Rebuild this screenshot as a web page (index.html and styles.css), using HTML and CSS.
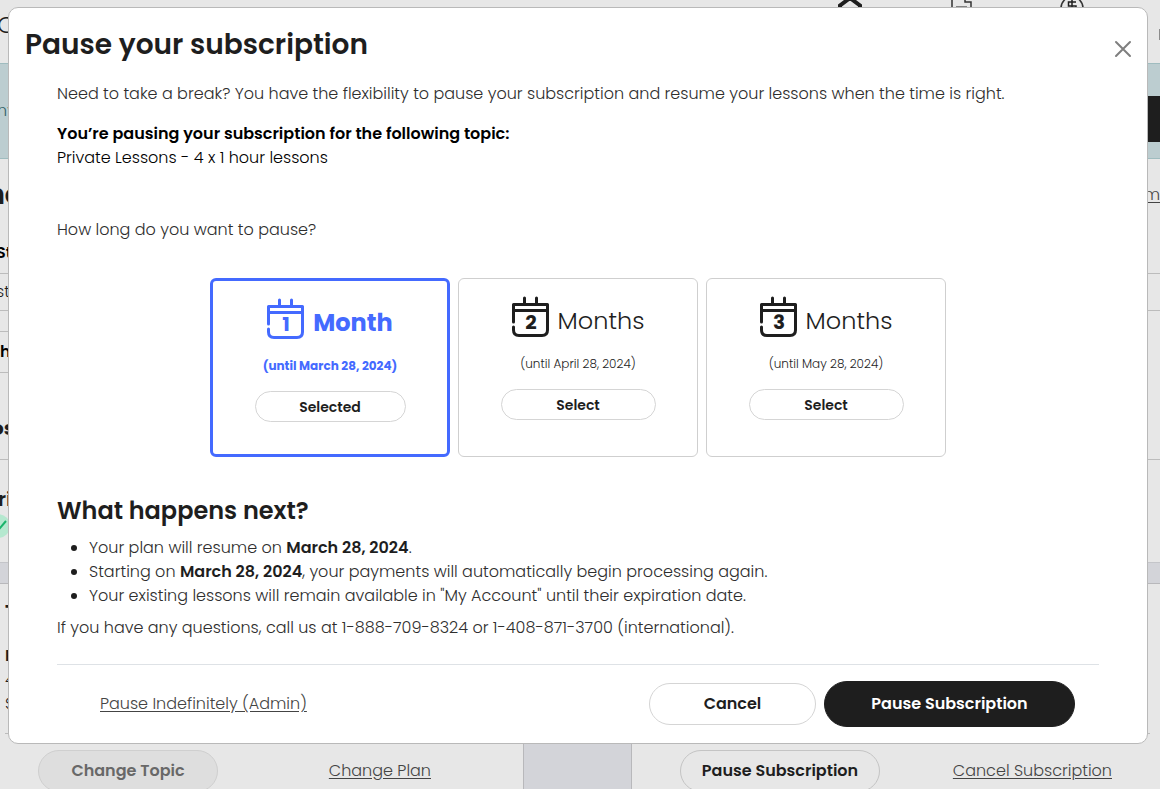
FILE: index.html
```html
<!DOCTYPE html>
<html lang="en">
<head>
    <meta charset="UTF-8">
    <meta name="viewport" content="width=device-width, initial-scale=1.0">
    <title>Pause your subscription</title>

    <link rel="stylesheet" href="styles.css">
</head>
<body>
    <div class="page">
        <header class="topBar">
            <div class="logo">C</div>
            <nav class="topNav">
                <svg width="24" height="10" viewBox="0 0 24 10"><path d="M0 7 L12 -2 L24 7" fill="none" stroke="#1e1e1e" stroke-width="4"/><path d="M3 6 V10 M21 6 V10" stroke="#1e1e1e" stroke-width="2"/></svg>
                <svg width="22" height="10" viewBox="0 0 22 10"><path d="M2 10 V-1 M15 -1 V2 H21 V10" fill="none" stroke="#333" stroke-width="1.500"/><path d="M6 7.500 H17" stroke="#1e1e1e" stroke-width="2"/></svg>
                <svg width="24" height="10" viewBox="0 0 24 10"><circle cx="12" cy="8" r="11" fill="none" stroke="#333" stroke-width="1.500"/><path d="M16 2 H8.500 V6 H16 V10 M12 -1 V10" fill="none" stroke="#1e1e1e" stroke-width="1.500"/></svg>
            </nav>
            <div class="topTail"></div>
        </header>

        <div class="banner">
            <span>nv</span>
            <button class="bannerButton" type="button" aria-label="View"></button>
        </div>

        <section class="account">
            <div class="accountTitle">
                <h1>ne</h1>
                <a href="#">m</a>
            </div>
            <div class="accountRow strong">St</div>
            <div class="accountRow">st</div>
            <div class="accountRow spacer"></div>
            <div class="accountRow strong last">h</div>
            <h3 class="accountHeading">os</h3>
            <div class="accountPlan">
                <div class="planName">ri</div>
                <svg width="24" height="24" viewBox="0 0 24 24"><circle cx="12" cy="12" r="12" fill="#b5e8cf"/><path d="M11 11 L14 14 L20 7" fill="none" stroke="#19b46b" stroke-width="2"/></svg>
            </div>
        </section>

        <section class="panels">
            <div class="panel">
                <div class="panelBody">
                    <h2>T</h2>
                    <p><b>P</b><br>4<br>S</p>
                </div>
                <div class="panelActions">
                    <button class="pill topicButton" type="button" disabled>Change Topic</button>
                    <a href="#">Change Plan</a>
                </div>
            </div>
            <div class="panel panelRight">
                <div class="panelBody"></div>
                <div class="panelActions">
                    <button class="pill pauseButton" type="button">Pause Subscription</button>
                    <a href="#">Cancel Subscription</a>
                </div>
            </div>
        </section>
    </div>

    <div class="overlay">
        <div class="modal" role="dialog" aria-labelledby="modalTitle">
            <div class="modalHeader">
                <h2 id="modalTitle">Pause your subscription</h2>
                <button class="closeButton" type="button" aria-label="Close">
                    <svg width="18" height="18" viewBox="0 0 18 18"><path d="M2 2 L16 16 M16 2 L2 16" stroke="#7f7f7f" stroke-width="2" stroke-linecap="round"/></svg>
                </button>
            </div>

            <div class="modalBody">
                <p class="intro">Need to take a break? You have the flexibility to pause your subscription and resume your lessons when the time is right.</p>
                <p class="topic"><b>You’re pausing your subscription for the following topic:</b><br>Private Lessons - 4 x 1 hour lessons</p>
                <p class="question">How long do you want to pause?</p>

                <div class="options">
                    <div class="option selected">
                        <div class="optionTitle">
                            <svg class="calendar" width="38" height="42" viewBox="0 0 38 42">
                                <path d="M12.500 2 V8 M24.500 2 V8 M1.500 26 V8.500 H35.500 V34 Q35.500 39.500 30 39.500 H7 Q1.500 39.500 1.500 34 V31 M2 14.500 H35"/>
                                <text x="19" y="33">1</text>
                            </svg>
                            <span>Month</span>
                        </div>
                        <div class="until">(until March 28, 2024)</div>
                        <button class="pill optionButton" type="button">Selected</button>
                    </div>
                    <div class="option">
                        <div class="optionTitle">
                            <svg class="calendar" width="38" height="42" viewBox="0 0 38 42">
                                <path d="M12.500 2 V8 M24.500 2 V8 M1.500 26 V8.500 H35.500 V34 Q35.500 39.500 30 39.500 H7 Q1.500 39.500 1.500 34 V31 M2 14.500 H35"/>
                                <text x="19" y="33">2</text>
                            </svg>
                            <span>Months</span>
                        </div>
                        <div class="until">(until April 28, 2024)</div>
                        <button class="pill optionButton" type="button">Select</button>
                    </div>
                    <div class="option">
                        <div class="optionTitle">
                            <svg class="calendar" width="38" height="42" viewBox="0 0 38 42">
                                <path d="M12.500 2 V8 M24.500 2 V8 M1.500 26 V8.500 H35.500 V34 Q35.500 39.500 30 39.500 H7 Q1.500 39.500 1.500 34 V31 M2 14.500 H35"/>
                                <text x="19" y="33">3</text>
                            </svg>
                            <span>Months</span>
                        </div>
                        <div class="until">(until May 28, 2024)</div>
                        <button class="pill optionButton" type="button">Select</button>
                    </div>
                </div>

                <h3>What happens next?</h3>
                <ul>
                    <li>Your plan will resume on <b>March 28, 2024</b>.</li>
                    <li>Starting on <b>March 28, 2024</b>, your payments will automatically begin processing again.</li>
                    <li>Your existing lessons will remain available in "My Account" until their expiration date.</li>
                </ul>
                <p class="questions">If you have any questions, call us at 1-888-709-8324 or 1-408-871-3700 (international).</p>

                <div class="modalFooter">
                    <a href="#">Pause Indefinitely (Admin)</a>
                    <div class="footerButtons">
                        <button class="pill cancelButton" type="button">Cancel</button>
                        <button class="pill confirmButton" type="button">Pause Subscription</button>
                    </div>
                </div>
            </div>
        </div>
    </div>
</body>
</html>
```

FILE: styles.css
```css
* {
    box-sizing: border-box;
}
body {
    margin: 0;
    height: 100vh;
    overflow: hidden;
    background-color: #e7e7e7;
    color: #1e1e1e;
    font-family: Poppins, Inter, sans-serif;
    font-size: 16px;
    font-weight: 300;
    line-height: 24px;
}
h1, h2, h3, p, ul {
    margin: 0;
}
b {
    font-weight: 600;
}
a {
    color: #444;
    text-decoration: underline;
    text-underline-offset: 2px;
}
button {
    font-family: inherit;
    color: #1e1e1e;
}
.pill {
    border: 1px solid #d5d5d5;
    border-radius: 24px;
    background-color: #fff;
    font-size: 16px;
    font-weight: 600;
    line-height: 24px;
}

/* page behind the modal */
.topBar {
    display: flex;
    justify-content: space-between;
    height: 63px;
}
.logo {
    margin-left: -3px;
    padding-top: 13px;
    font-size: 24px;
}
.topNav {
    display: flex;
    flex: 1;
    justify-content: flex-end;
    gap: 88px;
    padding-right: 75px;
}
.topTail {
    width: 1px;
    height: 11px;
    margin-top: 29px;
    background-color: #8c8c8c;
}
.banner {
    display: flex;
    align-items: center;
    justify-content: space-between;
    height: 96px;
    border: solid #9fbcbf;
    border-width: 1px 0;
    background-color: #bccdd0;
    color: #2f6067;
}
.banner span {
    margin-left: -3px;
}
.bannerButton {
    width: 80px;
    height: 46px;
    margin-top: 16px;
    border: 0;
    background-color: #1e1e1e;
}
.accountTitle {
    display: flex;
    align-items: center;
    justify-content: space-between;
    height: 72px;
}
.accountTitle h1 {
    margin-left: -14px;
    font-size: 28px;
}
.accountRow {
    height: 37px;
    margin-left: -4px;
    padding-top: 6px;
    border-bottom: 1px solid #bcbcbc;
}
.accountRow.strong {
    height: 43px;
    padding-top: 10px;
    font-weight: 600;
    color: #000;
}
.accountRow.spacer {
    width: 100px;
    height: 21px;
}
.accountRow.last {
    width: 100px;
    height: 41px;
    margin-left: 0;
    padding-top: 8px;
}
.accountHeading {
    height: 87px;
    margin-left: -9px;
    padding-top: 43px;
    border-bottom: 1px solid #bcbcbc;
    font-size: 20px;
}
.accountPlan {
    height: 102px;
    margin-left: -14px;
    padding-top: 27px;
}
.planName {
    padding-left: 12px;
    font-size: 20px;
    font-weight: 600;
}
.accountPlan svg {
    display: block;
    margin-top: 3px;
}
.panels {
    display: grid;
    grid-template-columns: 524px 1fr;
    column-gap: 107px;
    padding-top: 20px;
    border-top: 1px solid #c4c5c9;
    background-color: #d3d4d9;
}
.panel {
    border: solid #b8b8bb;
    border-width: 1px 1px 0 0;
    background-color: #e7e7e7;
}
.panelRight {
    border-width: 1px 0 0 1px;
}
.panelBody {
    height: 150px;
    margin-left: 5px;
    padding-top: 16px;
    border-bottom: 1px solid #bcbcbc;
}
.panelRight .panelBody {
    margin: 0 10px 0 40px;
}
.panelBody h2 {
    margin-bottom: 20px;
    font-size: 20px;
}
.panelActions {
    display: flex;
    align-items: center;
    justify-content: space-between;
    padding: 16px 92px 0 38px;
}
.panelRight .panelActions {
    padding: 16px 48px 0;
}
.panelActions .pill {
    height: 42px;
    border-color: #c4c4c4;
    background-color: transparent;
}
.panelActions .topicButton {
    width: 180px;
    background-color: #dedede;
    border-color: #cfcfcf;
    color: #686868;
}
.pauseButton {
    width: 200px;
}

/* modal */
.overlay {
    position: fixed;
    inset: 0;
    padding: 7px 12px 8px 8px;
}
.modal {
    border: 1px solid #b9b9b9;
    border-radius: 10px;
    background-color: #fff;
}
.modalHeader {
    display: flex;
    align-items: center;
    justify-content: space-between;
    padding: 17px 15px 16px 16px;
}
.modalHeader h2 {
    font-size: 28px;
    font-weight: 600;
    line-height: 40px;
}
.closeButton {
    padding: 8px 0 0;
    border: 0;
    background: none;
    line-height: 0;
}
.modalBody {
    padding: 1px 48px 16px;
}
.intro, .topic {
    margin-bottom: 16px;
}
.topic {
    color: #000;
}
.question {
    padding-top: 32px;
}
.options {
    display: flex;
    justify-content: center;
    gap: 8px;
    margin: 36px 0 37px;
}
.option {
    width: 240px;
    height: 179px;
    padding: 16px 0 0;
    border: 1px solid #cfcfcf;
    border-radius: 6px;
    text-align: center;
}
.option.selected {
    border: 3px solid #446aff;
    color: #446aff;
    font-weight: 700;
}
.optionTitle {
    display: flex;
    justify-content: center;
    gap: 8px;
    height: 49px;
    font-size: 24px;
    line-height: 52px;
}
.calendar {
    margin-top: 1px;
    fill: none;
    stroke: currentColor;
    stroke-width: 3;
    stroke-linecap: round;
    stroke-linejoin: round;
}
.calendar text {
    fill: currentColor;
    stroke: none;
    font-size: 20px;
    font-weight: 700;
    text-anchor: middle;
}
.until {
    margin: 8px 0 13px;
    font-size: 12px;
}
.optionButton {
    width: 155px;
    height: 31px;
    font-size: 14px;
    line-height: 20px;
}
.selected .optionButton {
    width: 151px;
}
.modalBody h3 {
    margin-bottom: 8px;
    font-size: 24px;
    font-weight: 600;
    line-height: 34px;
}
.modalBody ul {
    margin-bottom: 8px;
    padding-left: 32px;
}
.intro, .question, .questions, .modalBody li {
    color: #2e2e2e;
}
.modalBody li b {
    color: #1e1e1e;
}
.modalBody li::marker {
    color: #1e1e1e;
}
.modalFooter {
    display: flex;
    align-items: center;
    justify-content: space-between;
    margin-top: 24px;
    padding: 16px 24px 0 43px;
    border-top: 1px solid #dee2e6;
}
.footerButtons {
    display: flex;
    align-items: center;
    gap: 8px;
}
.cancelButton {
    width: 167px;
    height: 42px;
}
.confirmButton {
    width: 251px;
    height: 46px;
    border-color: #1e1e1e;
    background-color: #1e1e1e;
    color: #fff;
}
```
